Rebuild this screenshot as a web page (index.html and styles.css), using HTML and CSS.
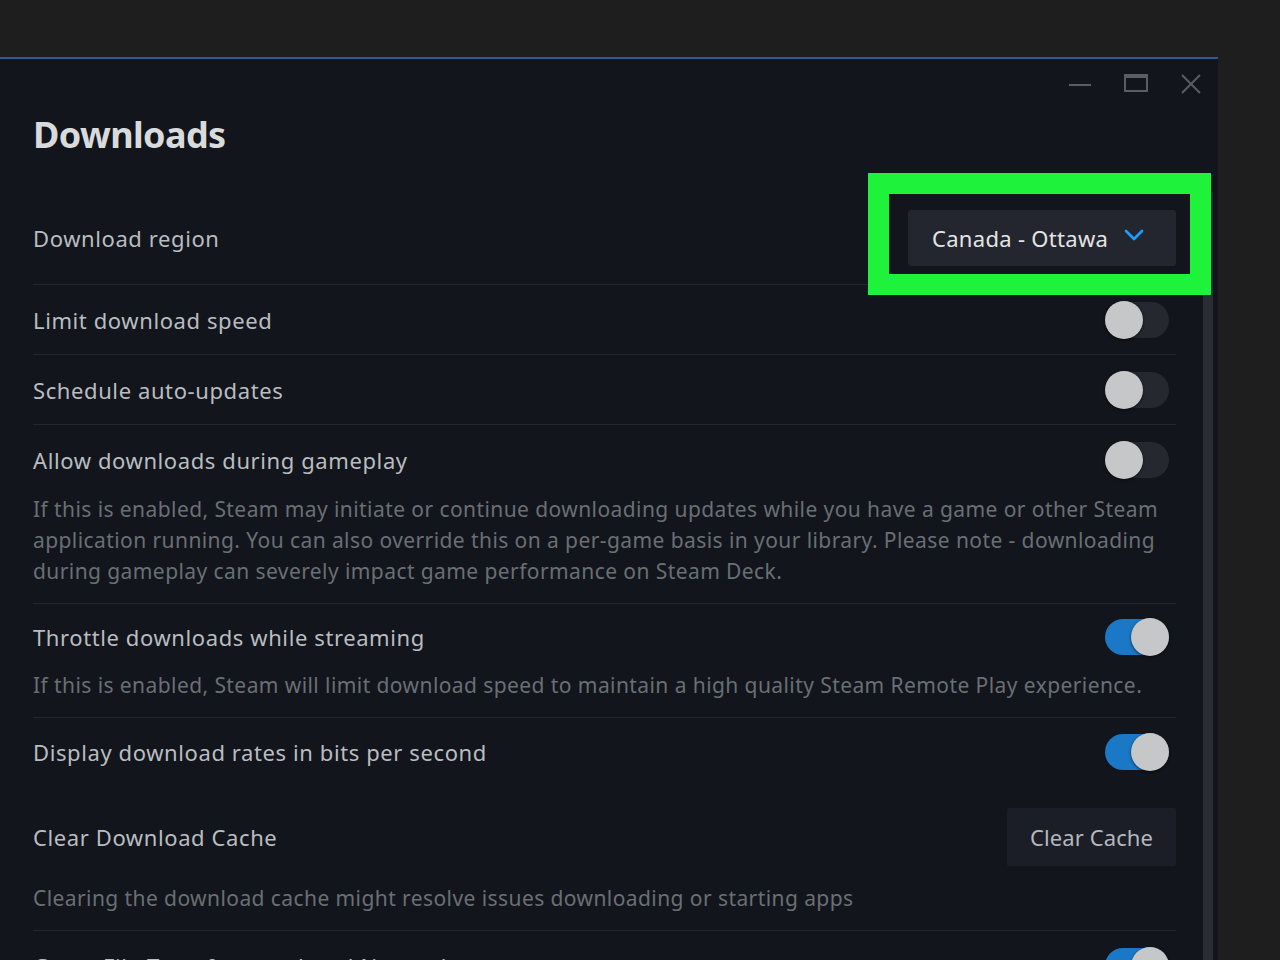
FILE: index.html
```html
<!DOCTYPE html>
<html lang="en">
<head>
<meta charset="utf-8">
<title>Downloads</title>
<link rel="stylesheet" href="styles.css">
</head>
<body>
<div class="window">
  <div class="titlebar">
    <span class="wc wc-min"><svg width="24" height="20" viewBox="0 0 24 20"><line x1="1" y1="11" x2="23" y2="11" stroke="#5a5e63" stroke-width="2"/></svg></span>
    <span class="wc wc-max"><svg width="24" height="20" viewBox="0 0 24 20"><rect x="1" y="2" width="22" height="16" fill="none" stroke="#5a5e63" stroke-width="2"/><rect x="1" y="1" width="22" height="4" fill="#5a5e63"/></svg></span>
    <span class="wc wc-close"><svg width="22" height="22" viewBox="0 0 22 22"><line x1="2" y1="2" x2="20" y2="20" stroke="#5a5e63" stroke-width="2"/><line x1="20" y1="2" x2="2" y2="20" stroke="#5a5e63" stroke-width="2"/></svg></span>
  </div>
  <h1 class="title">Downloads</h1>
  <div class="content">
    <div class="list">
      <div class="row row-region">
        <div class="row-head">
          <span class="label">Download region</span>
          <div class="dropdown">
            <span class="dropdown-text">Canada - Ottawa</span>
            <svg class="chevron" width="20" height="12" viewBox="0 0 20 12"><polyline points="2,2 10,10 18,2" fill="none" stroke="#1a9fff" stroke-width="2.6" stroke-linecap="round" stroke-linejoin="round"/></svg>
          </div>
        </div>
      </div>
      <div class="row">
        <div class="row-head">
          <span class="label">Limit download speed</span>
          <span class="toggle"><span class="knob"></span></span>
        </div>
      </div>
      <div class="row">
        <div class="row-head">
          <span class="label">Schedule auto-updates</span>
          <span class="toggle"><span class="knob"></span></span>
        </div>
      </div>
      <div class="row">
        <div class="row-head">
          <span class="label">Allow downloads during gameplay</span>
          <span class="toggle"><span class="knob"></span></span>
        </div>
        <p class="desc">If this is enabled, Steam may initiate or continue downloading updates while you have a game or other Steam application running. You can also override this on a per-game basis in your library. Please note - downloading during gameplay can severely impact game performance on Steam Deck.</p>
      </div>
      <div class="row row-throttle">
        <div class="row-head">
          <span class="label">Throttle downloads while streaming</span>
          <span class="toggle on"><span class="knob"></span></span>
        </div>
        <p class="desc desc-tight">If this is enabled, Steam will limit download speed to maintain a high quality Steam Remote Play experience.</p>
      </div>
      <div class="row row-plain">
        <div class="row-head">
          <span class="label">Display download rates in bits per second</span>
          <span class="toggle on"><span class="knob"></span></span>
        </div>
      </div>
      <div class="row row-cache">
        <div class="row-head">
          <span class="label">Clear Download Cache</span>
          <span class="button">Clear Cache</span>
        </div>
        <p class="desc desc-cache">Clearing the download cache might resolve issues downloading or starting apps</p>
      </div>
      <div class="row">
        <div class="row-head">
          <span class="label">Game File Transfer over Local Network</span>
          <span class="toggle on"><span class="knob"></span></span>
        </div>
      </div>
    </div>
    <div class="scrollbar"></div>
  </div>
</div>
<div class="highlight"></div>
</body>
</html>
```

FILE: styles.css
```css
html, body {
  margin: 0;
  padding: 0;
  height: 960px;
  overflow: hidden;
  background: #1e1e1e;
}

body {
  font-family: "Noto Sans", "Open Sans", sans-serif;
  position: relative;
}

.window {
  margin-top: 57px;
  width: 1218px;
  height: 903px;
  box-sizing: border-box;
  background: #12151b;
  border-top: 2px solid #2f5c96;
  overflow: hidden;
  display: flex;
  flex-direction: column;
}

.titlebar {
  height: 50px;
  box-sizing: border-box;
  padding-top: 15px;
  padding-right: 16px;
  display: flex;
  justify-content: flex-end;
  align-items: flex-start;
}

.wc {
  display: block;
  line-height: 0;
}

.wc-max {
  margin-left: 32px;
  margin-top: -1px;
}

.wc-close {
  margin-left: 32px;
  margin-top: -1px;
}

.title {
  margin: 4px 0 0 33px;
  font-size: 36px;
  line-height: 44px;
  font-weight: 700;
  color: #d8dadc;
  letter-spacing: -0.6px;
}

.content {
  flex: 1;
  display: flex;
  padding-top: 35px;
  min-height: 0;
}

.list {
  flex: 1;
  padding-left: 33px;
  margin-right: 27px;
}

.scrollbar {
  width: 10px;
  margin-right: 5px;
  background: #2a2d33;
}

.row {
  padding: 17px 0 16px;
  border-bottom: 1px solid #23262d;
}

.row-region {
  padding: 18px 0 18px;
}

.row-throttle {
  padding-top: 15px;
}

.row-plain {
  padding-top: 16px;
  border-bottom: none;
}

.row-head {
  display: flex;
  align-items: center;
  justify-content: space-between;
  min-height: 36px;
}

.label {
  font-size: 22px;
  letter-spacing: 0.6px;
  color: #b9bdc1;
}

.desc {
  margin: 16px 0 0;
  font-size: 21px;
  letter-spacing: 0.42px;
  line-height: 31px;
  color: #6a6f75;
}

.desc-tight {
  margin-top: 15px;
}

.row-cache .row-head {
  margin-top: 5px;
}

.desc-cache {
  margin-top: 17px;
}

.dropdown {
  width: 268px;
  height: 56px;
  box-sizing: border-box;
  padding: 0 24px;
  background: #23262e;
  border-radius: 3px;
  display: flex;
  align-items: center;
}

.dropdown-text {
  font-size: 22px;
  letter-spacing: 0.3px;
  color: #e4e5e6;
}

.chevron {
  margin-left: 16px;
  margin-top: -6px;
}

.button {
  width: 169px;
  height: 58px;
  box-sizing: border-box;
  background: #1b1e26;
  border-radius: 2px;
  display: flex;
  align-items: center;
  justify-content: center;
  font-size: 22px;
  letter-spacing: 0.1px;
  color: #b4b8bc;
}

.toggle {
  position: relative;
  width: 64px;
  height: 36px;
  margin-right: 7px;
  border-radius: 18px;
  background: #25282e;
  display: block;
}

.toggle .knob {
  position: absolute;
  top: -1px;
  left: 0;
  width: 38px;
  height: 38px;
  border-radius: 50%;
  background: #c5c7c9;
  box-shadow: 0 1px 3px rgba(0, 0, 0, 0.6);
}

.toggle.on {
  background: #1a78c6;
}

.toggle.on .knob {
  left: 26px;
}

.highlight {
  position: absolute;
  left: 868px;
  top: 173px;
  width: 343px;
  height: 122px;
  box-sizing: border-box;
  border: 21px solid #1ff23a;
}
```
